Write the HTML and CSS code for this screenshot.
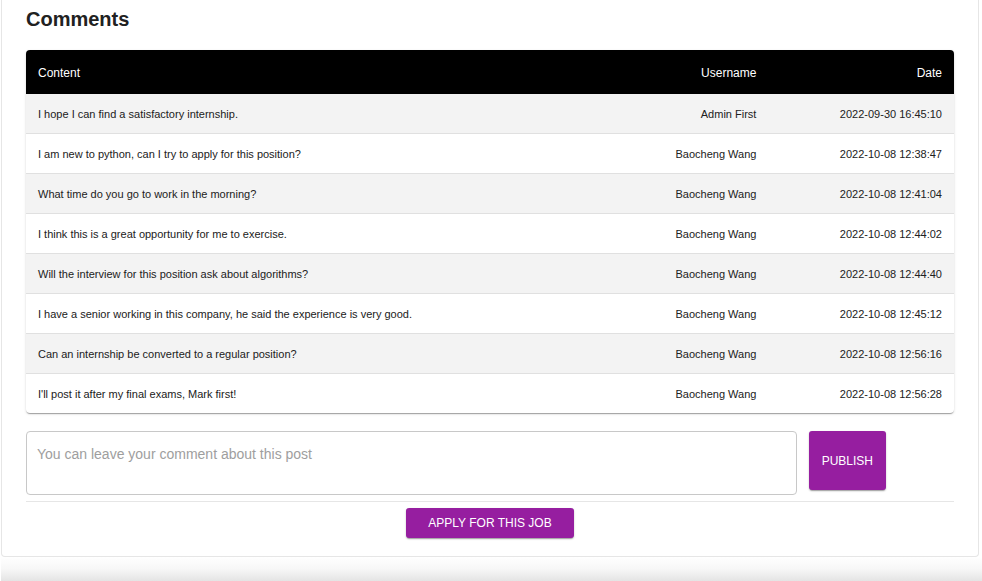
FILE: index.html
```html
<!DOCTYPE html>
<html lang="en">
<head>
<meta charset="utf-8">
<meta name="viewport" content="width=device-width, initial-scale=1">
<title>Comments</title>
<link rel="stylesheet" href="styles.css">
</head>
<body>
<main class="card">
  <h2 class="title">Comments</h2>
  <div class="table-paper">
    <table class="comments">
      <thead>
        <tr><th class="content" scope="col">Content</th><th class="username" scope="col">Username</th><th class="date" scope="col">Date</th></tr>
      </thead>
      <tbody>
        <tr><td>I hope I can find a satisfactory internship.</td><td>Admin First</td><td>2022-09-30 16:45:10</td></tr>
        <tr><td>I am new to python, can I try to apply for this position?</td><td>Baocheng Wang</td><td>2022-10-08 12:38:47</td></tr>
        <tr><td>What time do you go to work in the morning?</td><td>Baocheng Wang</td><td>2022-10-08 12:41:04</td></tr>
        <tr><td>I think this is a great opportunity for me to exercise.</td><td>Baocheng Wang</td><td>2022-10-08 12:44:02</td></tr>
        <tr><td>Will the interview for this position ask about algorithms?</td><td>Baocheng Wang</td><td>2022-10-08 12:44:40</td></tr>
        <tr><td>I have a senior working in this company, he said the experience is very good.</td><td>Baocheng Wang</td><td>2022-10-08 12:45:12</td></tr>
        <tr><td>Can an internship be converted to a regular position?</td><td>Baocheng Wang</td><td>2022-10-08 12:56:16</td></tr>
        <tr><td>I'll post it after my final exams, Mark first!</td><td>Baocheng Wang</td><td>2022-10-08 12:56:28</td></tr>
      </tbody>
    </table>
  </div>
  <form class="comment-form">
    <textarea class="comment-input" aria-label="Comment" placeholder="You can leave your comment about this post"></textarea>
    <button class="button publish" type="button">PUBLISH</button>
  </form>
  <div class="actions">
    <button class="button apply" type="button">APPLY FOR THIS JOB</button>
  </div>
</main>
<footer class="footer"></footer>
</body>
</html>
```
FILE: styles.css
```css
* {
  box-sizing: border-box;
}

body {
  margin: 0;
  min-height: 100vh;
  display: flex;
  flex-direction: column;
  background: #fff;
  color: #212121;
  font-family: "Liberation Sans", Arial, sans-serif;
}

.card {
  margin: 0 3px 0 1px;
  padding: 8px 24px 18px;
  border: 1px solid #e6e6e6;
  border-top: 0;
  border-radius: 0 0 4px 4px;
}

.title {
  margin: 0 0 20px;
  font-size: 20px;
  line-height: 22px;
}

.table-paper {
  overflow: hidden;
  border-radius: 4px;
  box-shadow: 0 2px 1px -1px rgba(0, 0, 0, 0.2), 0 1px 1px rgba(0, 0, 0, 0.14), 0 1px 3px rgba(0, 0, 0, 0.12);
}

.comments {
  width: 100%;
  table-layout: fixed;
  border-collapse: separate;
  border-spacing: 0;
}

.comments th {
  height: 44px;
  padding: 1px 12px 0;
  background: #000;
  color: #fff;
  font-size: 12px;
  font-weight: 400;
  text-align: right;
}

.comments td {
  height: 40px;
  padding: 1px 12px 0;
  border-bottom: 1px solid #e0e0e0;
  font-size: 11px;
  text-align: right;
}

.comments th:first-child,
.comments td:first-child {
  text-align: left;
}

.comments tbody tr:nth-child(odd) {
  background: #f3f3f3;
}

.comments tbody tr:last-child td {
  height: 39px;
  padding-top: 0;
  border-bottom: 0;
}

.username,
.date {
  width: 20%;
}

.comment-form {
  display: flex;
  align-items: flex-start;
  gap: 12px;
  margin-top: 18px;
  padding: 0 68px 6px 0;
  border-bottom: 1px solid #e6e6e6;
}

.comment-input {
  flex: 1;
  height: 64px;
  padding: 12px 10px;
  border: 1px solid #c8c8c8;
  border-radius: 4px;
  resize: none;
  color: #212121;
  font: 14px/20px "Liberation Sans", Arial, sans-serif;
}

.comment-input::placeholder {
  color: #9e9e9e;
  opacity: 1;
}

.button {
  border: 0;
  border-radius: 3px;
  background: #961ea0;
  color: #fff;
  font: 12px/20px "Liberation Sans", Arial, sans-serif;
  box-shadow: 0 2px 1px -1px rgba(0, 0, 0, 0.2), 0 1px 2px rgba(0, 0, 0, 0.24);
}

.publish {
  padding: 20px 13px 19px;
}

.apply {
  padding: 5px 22px;
}

.actions {
  display: flex;
  justify-content: center;
  padding-top: 6px;
}

.footer {
  height: 24px;
  margin: auto 0 0 1px;
  background: linear-gradient(#fff, #f7f7f7 50%, #e4e4e4);
}
```
